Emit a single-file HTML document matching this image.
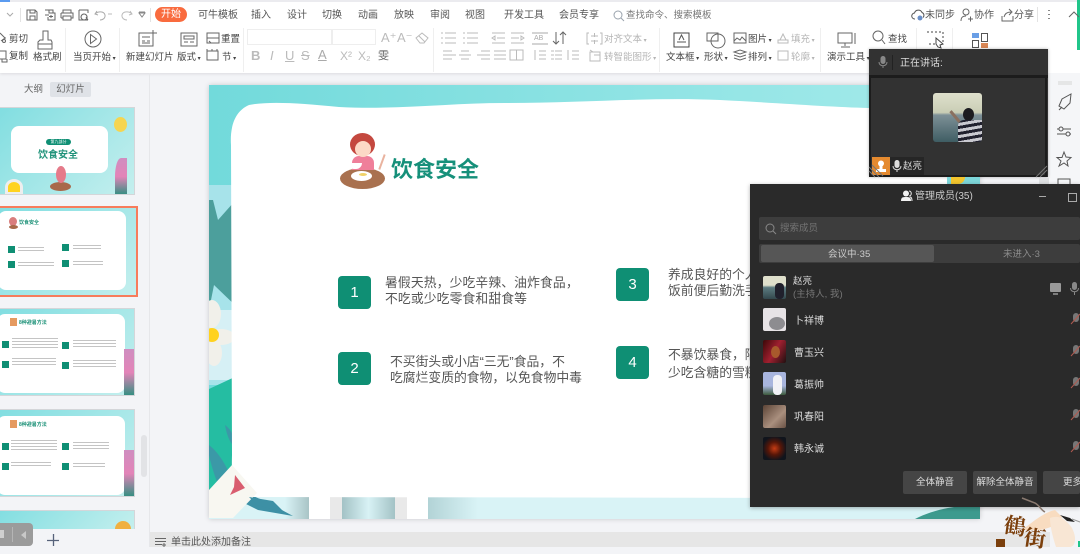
<!DOCTYPE html>
<html lang="zh">
<head>
<meta charset="utf-8">
<title>饮食安全</title>
<style>
html,body{margin:0;padding:0}
body{width:1080px;height:547px;overflow:hidden;position:relative;background:#f3f4f7;font-family:"Liberation Sans","Noto Sans CJK SC",sans-serif;color:#555}
.a{position:absolute}
.t{position:absolute;white-space:nowrap;line-height:12px}
.r{font-size:10px;color:#555}
.m{font-size:9.5px;color:#444}
.g{font-size:9.5px;color:#b5b5b5}
svg{position:absolute;overflow:visible}
.i{fill:none;stroke:#666;stroke-width:1}
.l{fill:none;stroke:#bbb;stroke-width:1}
.n{position:absolute;width:33px;height:33px;border-radius:4px;background:#0f8f74;color:#fff;font-size:15px;line-height:33px;text-align:center}
.b{position:absolute;font-size:12.8px;line-height:16px;color:#555;white-space:nowrap}
.th{position:absolute;left:-10px;width:145px;background:#fff;border:1px solid #d4d6d9;box-sizing:border-box;overflow:hidden}
.mn{position:absolute;left:794px;font-size:10px;line-height:12px;color:#ddd;white-space:nowrap}
.av{position:absolute;left:763px;width:23px;height:23px;border-radius:2px;overflow:hidden}
.btn{position:absolute;top:471px;height:23px;background:#454545;border-radius:2px;color:#ddd;font-size:9.5px;line-height:24px;text-align:center;white-space:nowrap;overflow:hidden}
.ln{position:absolute;background:repeating-linear-gradient(#c4c4c4 0 1px,#fff 1px 3px)}
.sq{position:absolute;width:7px;height:7px;background:#0f8f74}
</style>
</head>
<body>
<!-- top ribbon -->
<div class="a" style="left:0;top:0;width:1080px;height:73px;background:#fff;box-shadow:0 1px 3px rgba(0,0,0,.1)"></div>
<div class="a" style="left:0;top:0;width:1080px;height:2px;background:#ebebef"></div>
<div class="a" style="left:0;top:0;width:10px;height:2px;background:#5b9bf0"></div>
<div class="a" style="left:1077px;top:0;width:3px;height:50px;background:#20c58a"></div>
<div class="a" style="left:20px;top:8px;width:1px;height:14px;background:#e3e3e3"></div>
<div class="a" style="left:150px;top:8px;width:1px;height:14px;background:#e3e3e3"></div>

<!-- ribbon icons, in page coordinates -->
<svg style="left:0;top:0" width="1080" height="73" viewBox="0 0 1080 73">
<path class="i" style="stroke:#aaa" d="M7 13l3 3 3-3"/>
<path class="i" d="M27 10h8l2 2v8H27zM30 10v3h5v-3M30 20v-4h5v4"/>
<path class="i" d="M45 10h8v3M49 10v3h6v7h-7v-3M45 15h4M51 15v3M49 16.500h4"/>
<path class="i" d="M63 13v-3h8v3M61 13h12v5h-2M61 18v-5M61 18h2M63 16h8v4h-8z"/>
<path class="i" d="M79 10h9v3M79 10v10h9M84 14a3 3 0 1 0 .1 0M86 17l2 3"/>
<path class="i" style="stroke:#aaa" d="M97 11l-2 3 3 1M95 14c3-3 9-3 10 1 .5 3-2 5-5 5"/>
<path class="i" style="stroke:#bbb" d="M108 14h4"/>
<path class="i" style="stroke:#bbb" d="M130 11l2 3-3 1M132 14c-3-3-9-3-10 1-.5 3 2 5 5 5"/>
<path class="i" style="stroke:#888" d="M139 13h6l-3 4zM139 12h6"/>
<!-- clipboard -->
<path class="i" d="M0 33l5 5M1 41l4-3M5 38h1"/><circle cx="4" cy="41" r="1.500" class="i"/>
<path class="i" d="M0 51h6v8H0M2 59v3h5v-3"/>
<path class="i" d="M43 31h5v9h3l1 2v7H38v-7l2-2h3zM38 44h14"/>
<circle cx="93" cy="39" r="8" class="i"/><path class="i" d="M90.500 34.500l6 4.500-6 4.500z"/>
<path class="i" d="M139 33h14v13h-14zM142 37h8M142 41h3M147 41h3M142 43h8M153 30v7M150 33h7"/>
<path class="i" d="M181 33h16v13h-16zM184 36h10v3h-10zM184 42h4M190 42h4"/>
<path class="i" d="M207 33h12v5h-12zM207 38h12v5h-12zM209 41l2 2"/>
<path class="i" d="M207 51h11v9h-11zM207 49v2M212 49v2M217 49v2"/>
<!-- font grow/eraser -->
<path class="l" d="M416 38l6-5 6 5-4 5h-4zM419 36l6 6"/>
<!-- paragraph row 1 -->
<path class="l" d="M441 33h2M445 33h11M441 38h2M445 38h11M441 43h2M445 43h11M463 33h2M467 33h11M463 38h2M467 38h11M463 43h2M467 43h11"/>
<path class="l" d="M492 33h13M497 38h8M492 38l3-2v4zM492 43h13M511 33h13M511 38h8M524 38l-3-2v4zM511 43h13"/>
<path class="i" style="stroke:#aaa" d="M532 33h16M532 44h16"/>
<path class="i" d="M556 32v12M553 41l3 3 3-3M563 32v12M560 35l3-3 3 3"/>
<path class="l" d="M589 33h-2v11h2M600 33h2v11h-2M591 36h7M591 41h7M594.500 33v4M594.500 40v4"/>
<!-- paragraph row 2 -->
<path class="l" d="M443 51h9M443 55h13M443 59h9M461 51h8M459 55h12M461 59h8M481 51h9M477 55h13M481 59h9M494 51h12M494 55h12M494 59h12M510 50h13v10h-13zM516.500 50v10"/>
<path class="l" d="M539 51h7M539 55h7M539 59h7M535 50v10M555 51h7M555 55h7M555 59h7M551 51h3M551 55h3M551 59h3M572 51h7M572 55h7M572 59h7M568 50v10"/>
<path class="l" d="M590 52h10v9h-10zM590 50l3 2M594 55h6"/>
<!-- right group -->
<path d="M674 33h15v14h-15z" fill="none" stroke="#444"/><path d="M677 42h9M679 40l2.500-5 2.500 5" fill="none" stroke="#555"/>
<circle cx="718" cy="41" r="7" class="i"/><path class="i" d="M707 33h11v8h-11z"/>
<path class="i" d="M734 33h12v10h-12zM734 41l3-3 3 2 2-3 4 4"/>
<path class="i" d="M734 52l6-2 6 2-6 2zM734 55l6 2 6-2M734 58l6 2 6-2"/>
<path class="l" d="M778 40h10v3h-10zM780 40l3-6 3 6"/><path class="l" d="M778 51h10v9h-10z"/>
<path class="i" d="M838 33h14v10h-14zM845 43v3M841 47h9M855 33v11"/>
<circle cx="878" cy="36" r="5" class="i"/><path class="i" d="M882 40l3 4"/>
<path d="M927 32h16v12h-16" fill="none" stroke="#444" stroke-dasharray="2 2"/>
<path d="M936 38l7 6-3 1 1 3-3-1-2-3z" fill="#fff" stroke="#444"/>
</svg>

<!-- tabs -->
<div class="t" style="left:155px;top:7px;width:32px;height:15px;background:#f96b3e;border-radius:8px;color:#fff;font-size:10px;line-height:16px;text-align:center">开始</div>
<div class="t r" style="left:198px;top:10px">可牛模板</div>
<div class="t r" style="left:251px;top:10px">插入</div>
<div class="t r" style="left:287px;top:10px">设计</div>
<div class="t r" style="left:322px;top:10px">切换</div>
<div class="t r" style="left:358px;top:10px">动画</div>
<div class="t r" style="left:394px;top:10px">放映</div>
<div class="t r" style="left:430px;top:10px">审阅</div>
<div class="t r" style="left:465px;top:10px">视图</div>
<div class="t r" style="left:504px;top:10px">开发工具</div>
<div class="t r" style="left:559px;top:10px">会员专享</div>
<svg style="left:613px;top:10px" width="12" height="12"><circle cx="5" cy="5" r="4" fill="none" stroke="#9aa3ad"/><path d="M8 8l3 3" stroke="#9aa3ad"/></svg>
<div class="t" style="left:626px;top:10px;font-size:9.500px;color:#777">查找命令、搜索模板</div>

<svg style="left:911px;top:8px" width="14" height="14"><path d="M4 11a3 3 0 0 1-.5-6A4 4 0 0 1 11 4.500a3 3 0 0 1 1 5" fill="none" stroke="#555"/><circle cx="9" cy="10" r="2.500" fill="#6a8fc8"/></svg>
<div class="t r" style="left:925px;top:10px">未同步</div>
<svg style="left:960px;top:8px" width="14" height="14"><circle cx="6" cy="4" r="3" fill="none" stroke="#666"/><path d="M1 13c0-4 2-5 5-5M8 11h5M10.500 8.500v5" fill="none" stroke="#666"/></svg>
<div class="t r" style="left:974px;top:10px">协作</div>
<svg style="left:1001px;top:8px" width="14" height="14"><path d="M1 8v5h11V8M3 9c1-4 4-5 7-5M8 1l3 3-3 3" fill="none" stroke="#666"/></svg>
<div class="t r" style="left:1014px;top:10px">分享</div>
<div class="a" style="left:1037px;top:7px;width:1px;height:15px;background:#e3e3e3"></div>
<svg style="left:1047px;top:9px" width="30" height="12"><path d="M2 1v1M2 5v1M2 9v1" stroke="#555" stroke-width="1.400"/><path d="M22 8l5-5 5 5" fill="none" stroke="#666"/></svg>

<!-- ribbon labels -->
<div class="t m" style="left:9px;top:34px">剪切</div>
<div class="t m" style="left:9px;top:51px">复制</div>
<div class="t m" style="left:33px;top:52px">格式刷</div>
<div class="t m" style="left:73px;top:52px">当页开始<span style="font-size:6px"> ▾</span></div>
<div class="t m" style="left:126px;top:52px">新建幻灯片</div>
<div class="t m" style="left:177px;top:52px">版式<span style="font-size:6px"> ▾</span></div>
<div class="t m" style="left:221px;top:34px">重置</div>
<div class="t m" style="left:222px;top:52px">节<span style="font-size:6px"> ▾</span></div>
<div class="a" style="left:65px;top:28px;width:1px;height:44px;background:#efefef"></div>
<div class="a" style="left:119px;top:28px;width:1px;height:44px;background:#efefef"></div>
<div class="a" style="left:243px;top:28px;width:1px;height:44px;background:#efefef"></div>
<div class="a" style="left:433px;top:28px;width:1px;height:44px;background:#efefef"></div>
<div class="a" style="left:659px;top:28px;width:1px;height:44px;background:#efefef"></div>
<div class="a" style="left:820px;top:28px;width:1px;height:44px;background:#efefef"></div>
<div class="a" style="left:916px;top:28px;width:1px;height:44px;background:#efefef"></div>
<div class="a" style="left:952px;top:28px;width:1px;height:44px;background:#efefef"></div>

<!-- font boxes -->
<div class="a" style="left:247px;top:29px;width:85px;height:16px;border:1px solid #eee;box-sizing:border-box"></div>
<div class="a" style="left:332px;top:29px;width:44px;height:16px;border:1px solid #eee;box-sizing:border-box"></div>
<div class="t" style="left:251px;top:50px;font-size:13px;font-weight:bold;color:#bbb">B</div>
<div class="t" style="left:270px;top:50px;font-size:13px;font-style:italic;color:#bbb">I</div>
<div class="t" style="left:285px;top:50px;font-size:13px;text-decoration:underline;color:#bbb">U</div>
<div class="t" style="left:301px;top:50px;font-size:13px;text-decoration:line-through;color:#bbb">S</div>
<div class="t" style="left:318px;top:49px;font-size:13px;text-decoration:underline;color:#aaa">A</div>
<div class="t" style="left:340px;top:50px;font-size:12px;color:#bbb">X²</div>
<div class="t" style="left:358px;top:50px;font-size:12px;color:#bbb">X₂</div>
<div class="t" style="left:378px;top:50px;font-size:11px;color:#666">雯</div>
<div class="t" style="left:381px;top:32px;font-size:13px;color:#bbb">A⁺</div>
<div class="t" style="left:397px;top:32px;font-size:13px;color:#bbb">A⁻</div>
<div class="t" style="left:534px;top:33px;font-size:7px;color:#aaa">AB</div>
<div class="t g" style="left:604px;top:34px">对齐文本<span style="font-size:6px"> ▾</span></div>
<div class="t g" style="left:604px;top:52px">转智能图形<span style="font-size:6px"> ▾</span></div>

<!-- right labels -->
<div class="t m" style="left:666px;top:52px">文本框<span style="font-size:6px"> ▾</span></div>
<div class="t m" style="left:704px;top:52px">形状<span style="font-size:6px"> ▾</span></div>
<div class="t m" style="left:748px;top:34px">图片<span style="font-size:6px"> ▾</span></div>
<div class="t m" style="left:748px;top:52px">排列<span style="font-size:6px"> ▾</span></div>
<div class="t g" style="left:791px;top:34px">填充<span style="font-size:6px"> ▾</span></div>
<div class="t g" style="left:791px;top:52px">轮廓<span style="font-size:6px"> ▾</span></div>
<div class="t m" style="left:827px;top:52px">演示工具<span style="font-size:6px"> ▾</span></div>
<div class="t m" style="left:888px;top:34px">查找</div>
<div class="a" style="left:972px;top:33px;width:7px;height:5px;background:#6a9fe6"></div>
<div class="a" style="left:972px;top:40px;width:7px;height:8px;border:1px solid #555;box-sizing:border-box"></div>
<div class="a" style="left:981px;top:33px;width:7px;height:9px;border:1px solid #555;box-sizing:border-box"></div>
<div class="a" style="left:981px;top:43px;width:7px;height:5px;background:#d98755"></div>

<!-- left panel -->
<div class="a" style="left:149px;top:73px;width:1px;height:474px;background:#e6e7ea"></div>
<div class="t" style="left:24px;top:84px;font-size:9.500px;color:#666">大纲</div>
<div class="t" style="left:50px;top:82px;width:41px;height:15px;background:#dfe2e7;border-radius:2px;font-size:9.500px;line-height:15px;text-align:center;color:#666">幻灯片</div>

<!-- thumb 1 -->
<div class="th" style="top:107px;height:88px;background:linear-gradient(135deg,#7fdde0,#c4efee)">
  <div class="a" style="left:20px;top:18px;width:97px;height:47px;background:#fff;border-radius:8px"></div>
  <div class="a" style="left:55px;top:31px;width:25px;height:6px;border-radius:3px;background:#0f8f74;color:#fff;font-size:4px;line-height:6px;text-align:center">第九部分</div>
  <div class="t" style="left:47px;top:42px;font-size:10px;font-weight:bold;color:#20937a">饮食安全</div>
  <div class="a" style="left:59px;top:74px;width:21px;height:9px;border-radius:50%;background:#a8694a"></div>
  <div class="a" style="left:65px;top:58px;width:10px;height:17px;border-radius:50%;background:#e57b8a"></div>
  <div class="a" style="left:14px;top:71px;width:18px;height:16px;border-radius:50% 50% 0 0;background:#ffd320;border:3px solid #eee;box-sizing:border-box"></div>
  <div class="a" style="left:123px;top:9px;width:13px;height:15px;border-radius:50%;background:#f5d550"></div>
  <div class="a" style="left:124px;top:50px;width:12px;height:37px;background:linear-gradient(#cf8ec0,#e384b8 50%,#2f8f80);border-radius:50% 0 0 0"></div>
</div>
<!-- thumb 2 -->
<div class="a" style="left:-10px;top:206px;width:148px;height:91px;border:2px solid #f77c5c;box-sizing:border-box;background:linear-gradient(135deg,#7fdde0,#c4efee);overflow:hidden">
  <div class="a" style="left:6px;top:3px;width:128px;height:79px;background:#fff;border-radius:8px"></div>
  <div class="a" style="left:17px;top:9px;width:8px;height:9px;border-radius:50%;background:#d97d7d"></div>
  <div class="a" style="left:17px;top:17px;width:9px;height:4px;border-radius:50%;background:#a8694a"></div>
  <div class="t" style="left:27px;top:9px;font-size:5px;font-weight:bold;color:#20937a">饮食安全</div>
  <div class="sq" style="left:16px;top:38px"></div>
  <div class="sq" style="left:16px;top:53px"></div>
  <div class="sq" style="left:70px;top:36px"></div>
  <div class="sq" style="left:70px;top:52px"></div>
  <div class="ln" style="left:26px;top:39px;width:26px;height:5px"></div>
  <div class="ln" style="left:26px;top:54px;width:36px;height:5px"></div>
  <div class="ln" style="left:81px;top:37px;width:28px;height:5px"></div>
  <div class="ln" style="left:81px;top:53px;width:30px;height:5px"></div>
</div>
<!-- thumb 3 -->
<div class="th" style="top:308px;height:88px;background:linear-gradient(135deg,#7fdde0,#c4efee)">
  <div class="a" style="left:6px;top:5px;width:128px;height:79px;background:#fff;border-radius:8px"></div>
  <div class="t" style="left:28px;top:8px;font-size:5px;font-weight:bold;color:#20937a">8种避暑方法</div>
  <div class="a" style="left:19px;top:9px;width:7px;height:8px;background:#e59a60"></div>
  <div class="sq" style="left:11px;top:32px"></div>
  <div class="sq" style="left:11px;top:52px"></div>
  <div class="sq" style="left:71px;top:33px"></div>
  <div class="sq" style="left:71px;top:53px"></div>
  <div class="ln" style="left:21px;top:29px;width:46px;height:11px"></div>
  <div class="ln" style="left:21px;top:49px;width:44px;height:8px"></div>
  <div class="ln" style="left:82px;top:31px;width:43px;height:8px"></div>
  <div class="ln" style="left:82px;top:51px;width:43px;height:8px"></div>
  <div class="a" style="left:133px;top:40px;width:10px;height:47px;background:linear-gradient(#cf8ec0,#e384b8 50%,#2f8f80)"></div>
</div>
<!-- thumb 4 -->
<div class="th" style="top:409px;height:88px;background:linear-gradient(135deg,#7fdde0,#c4efee)">
  <div class="a" style="left:6px;top:6px;width:128px;height:79px;background:#fff;border-radius:8px"></div>
  <div class="t" style="left:28px;top:9px;font-size:5px;font-weight:bold;color:#20937a">8种避暑方法</div>
  <div class="a" style="left:19px;top:10px;width:7px;height:8px;background:#e59a60"></div>
  <div class="sq" style="left:11px;top:33px"></div>
  <div class="sq" style="left:11px;top:53px"></div>
  <div class="sq" style="left:71px;top:33px"></div>
  <div class="sq" style="left:71px;top:53px"></div>
  <div class="ln" style="left:20px;top:30px;width:46px;height:11px"></div>
  <div class="ln" style="left:20px;top:52px;width:40px;height:6px"></div>
  <div class="ln" style="left:82px;top:32px;width:36px;height:8px"></div>
  <div class="ln" style="left:82px;top:53px;width:32px;height:5px"></div>
  <div class="a" style="left:133px;top:40px;width:10px;height:47px;background:linear-gradient(#cf8ec0,#e384b8 50%,#2f8f80)"></div>
</div>
<!-- thumb 5 -->
<div class="a" style="left:-10px;top:510px;width:145px;height:20px;background:linear-gradient(135deg,#7fdde0,#c4efee);border:1px solid #d4d6d9;box-sizing:border-box"></div>
<div class="a" style="left:115px;top:521px;width:16px;height:9px;background:#f0b040;border-radius:8px 8px 0 0"></div>
<div class="a" style="left:0;top:529px;width:149px;height:18px;background:#f3f4f7"></div>
<div class="a" style="left:141px;top:435px;width:6px;height:42px;background:#e2e3e6;border-radius:3px"></div>
<div class="a" style="left:0;top:523px;width:33px;height:23px;background:#9b9b9b;border-radius:0 4px 4px 0"></div>
<div class="a" style="left:0;top:530px;width:4px;height:8px;background:#cfcfcf"></div>
<div class="a" style="left:12px;top:527px;width:1px;height:15px;background:#b5b5b5"></div>
<svg style="left:20px;top:531px" width="8" height="9"><path d="M6 0v8L1 4z" fill="#c8c8c8"/></svg>
<svg style="left:47px;top:534px" width="13" height="13"><path d="M6.500 0v12M0 6.500h12" stroke="#56627a" stroke-width="1.300"/></svg>

<!-- slide -->
<div class="a" style="left:209px;top:85px;width:771px;height:434px;background:linear-gradient(90deg,#72dadb,#a6ebeb);box-shadow:0 0 5px rgba(0,0,0,.18);overflow:hidden">
  <svg style="left:0;top:0" width="771" height="434" viewBox="0 0 771 434">
    <defs>
      <linearGradient id="bd" x1="0" x2="1" y1="0" y2="0"><stop offset="0" stop-color="#b2d3d6"/><stop offset="1" stop-color="#d9f3f6"/></linearGradient>
      <linearGradient id="rg" x1="0" x2="1" y1="0" y2="0"><stop offset="0" stop-color="#a3c2c5"/><stop offset=".5" stop-color="#d8f2f5"/><stop offset="1" stop-color="#a3c2c5"/></linearGradient>
      <linearGradient id="lb" x1="0" x2="1" y1="0" y2="0"><stop offset="0" stop-color="#d9f3f6"/><stop offset=".7" stop-color="#d9f3f6"/><stop offset="1" stop-color="#a9c4c6"/></linearGradient>
    </defs>
    <!-- left strip -->
    <rect x="0" y="100" width="30" height="200" fill="#a7e3ea"/>
    <path d="M0 115h4l5 20 16-18 6 0v108L5 200 0 225z" fill="#4c9f9c"/>
    <rect x="0" y="225" width="30" height="70" fill="#d6f0f5"/>
    <path d="M0 304l30-14v140H0z" fill="#25bda2"/>
    <path d="M0 360c10 8 20 22 28 50l-10 10C8 400 2 380 0 370zM16 340c6 4 10 12 12 24-6-4-10-12-12-24z" fill="#3f93a8" opacity=".85"/>
    <!-- flower -->
    <ellipse cx="3" cy="229" rx="9" ry="14" fill="#f1f0ea"/>
    <ellipse cx="12" cy="252" rx="14" ry="8" fill="#f1f0ea"/>
    <ellipse cx="5" cy="268" rx="8" ry="13" fill="#f1f0ea"/>
    <circle cx="3" cy="250" r="7" fill="#ffd21f"/>
    <!-- bottom strip -->
    <rect x="0" y="412" width="771" height="22" fill="#d9f3f6"/>
    <rect x="20" y="412" width="80" height="22" fill="url(#lb)"/>
    <path d="M30 405l28 12 26 14-35-6-20-10z" fill="#3d90a5"/>
    <rect x="100" y="412" width="21" height="22" fill="#fff"/>
    <rect x="121" y="412" width="12" height="22" fill="#e9e9e9"/>
    <rect x="133" y="412" width="53" height="22" fill="url(#rg)"/>
    <rect x="186" y="412" width="12" height="22" fill="#e9e9e9"/>
    <rect x="198" y="412" width="21" height="22" fill="#fff"/>
    <rect x="219" y="412" width="50" height="22" fill="url(#bd)"/>
    <path d="M706 434C725 424 750 420 771 420V434z" fill="#3d9a8e"/>
    <!-- white card -->
    <path d="M40 20C60 16 90 18 130 22C190 25 240 18 296 18C370 18 440 12 511 15C570 18 620 22 660 23C700 25 730 30 738 45L738 380C735 400 700 412 660 413L40 412C26 412 22 405 23 370L22 60C21 45 24 27 40 20Z" fill="#fff"/>
    <!-- paper -->
    <path d="M23 380L48 408L24 433H0V405z" fill="#f8f7f1"/>
    <path d="M26 390L36 403L21 410L25 402z" fill="#d95d6f"/>
    <path d="M40 412l24 4 12 12-28-8z" fill="#3d90a5"/>
  </svg>
  <!-- character -->
  <div class="a" style="left:131px;top:83px;width:45px;height:21px;border-radius:50%;background:#a9714f"></div>
  <div class="a" style="left:142px;top:86px;width:21px;height:10px;border-radius:50%;background:#fff"></div>
  <div class="a" style="left:150px;top:88px;width:8px;height:3px;border-radius:50%;background:#f0d268"></div>
  <div class="a" style="left:143px;top:71px;width:22px;height:14px;border-radius:7px 7px 0 0;background:#ef7f9a"></div>
  <div class="a" style="left:141px;top:48px;width:25px;height:23px;border-radius:50%;background:#c4483f"></div>
  <div class="a" style="left:146px;top:56px;width:16px;height:16px;border-radius:50%;background:#fcd9c6"></div>
  <div class="a" style="left:139px;top:78px;width:14px;height:6px;border-radius:0 0 7px 7px;background:#fff"></div>
  <div class="a" style="left:172px;top:69px;width:2px;height:16px;background:#e9b39f;transform:rotate(20deg)"></div>
  <div class="t" style="left:182px;top:73px;font-size:22px;line-height:24px;font-weight:bold;color:#16907a">饮食安全</div>
  <div class="n" style="left:129px;top:191px">1</div>
  <div class="b" style="left:176px;top:190px;letter-spacing:.12px">暑假天热，少吃辛辣、油炸食品，<br>不吃或少吃零食和甜食等</div>
  <div class="n" style="left:129px;top:267px">2</div>
  <div class="b" style="left:181px;top:269px">不买街头或小店“三无”食品，不<br>吃腐烂变质的食物，以免食物中毒</div>
  <div class="n" style="left:407px;top:183px">3</div>
  <div class="b" style="left:459px;top:182px">养成良好的个人卫生习惯，<br>饭前便后勤洗手</div>
  <div class="n" style="left:407px;top:261px">4</div>
  <div class="b" style="left:459px;top:261px;line-height:18px">不暴饮暴食，隔夜饭菜要<br>少吃含糖的雪糕冷饮</div>
</div>

<!-- right sidebar -->
<div class="a" style="left:1047px;top:73px;width:33px;height:112px;background:#f5f6f8"></div>
<svg style="left:1056px;top:79px" width="24" height="110">
<path d="M2 3h14M2 5h14" stroke="#d5d5d5"/>
<path d="M3 27l3-7 9-5-1 9-6 6zM3 31l3-3" fill="none" stroke="#555"/>
<path d="M1 50h14M1 55h14" stroke="#555"/><circle cx="5" cy="50" r="2" fill="#f5f6f8" stroke="#555"/><circle cx="12" cy="55" r="2" fill="#f5f6f8" stroke="#555"/>
<path d="M8 73l2 5 5 .5-4 3.500 1 5-4-3-5 3 2-5-4-3.500h5z" fill="none" stroke="#555"/>
<path d="M2 100h12v6H2z" fill="none" stroke="#555"/>
</svg>

<!-- speaker panel -->
<div class="a" style="left:869px;top:49px;width:179px;height:128px;background:#323232;box-shadow:0 0 3px rgba(0,0,0,.3)"></div>
<div class="a" style="left:869px;top:75px;width:179px;height:3px;background:#1c1c1c"></div>
<div class="a" style="left:869px;top:75px;width:2px;height:102px;background:#1c1c1c"></div>
<div class="a" style="left:1045px;top:75px;width:2px;height:102px;background:#1c1c1c"></div>
<div class="a" style="left:869px;top:175px;width:178px;height:2px;background:#1c1c1c"></div>
<div class="a" style="left:892px;top:55px;width:1px;height:15px;background:#222"></div>
<svg style="left:878px;top:56px" width="10" height="13"><rect x="2.500" y="0" width="5" height="8" rx="2.500" fill="#888"/><path d="M1 6c0 5 8 5 8 0M5 10v2" fill="none" stroke="#888"/></svg>
<div class="t" style="left:900px;top:58px;font-size:10px;color:#ddd">正在讲话:</div>
<div class="a" style="left:933px;top:93px;width:49px;height:49px;border-radius:3px;overflow:hidden;background:linear-gradient(#dfe0cc 0,#c9cdb5 40%,#7d9097 45%,#3f5d63 100%)">
  <div class="a" style="left:30px;top:15px;width:11px;height:13px;border-radius:50%;background:#1c1c20"></div>
  <div class="a" style="left:25px;top:27px;width:24px;height:22px;border-radius:6px 0 0 0;background:repeating-linear-gradient(170deg,#20202e 0 3px,#c9c9d0 3px 6px)"></div>
  <div class="a" style="left:15px;top:22px;width:14px;height:3px;background:#8a7060;transform:rotate(50deg)"></div>
</div>
<div class="a" style="left:872px;top:157px;width:18px;height:18px;background:#e58a2f"></div>
<svg style="left:875px;top:160px" width="12" height="13"><circle cx="6" cy="3.500" r="3" fill="#fff"/><path d="M4.500 6h3v3h3.500v3H1V9h3.500z" fill="#fff"/></svg>
<div class="a" style="left:890px;top:157px;width:34px;height:18px;background:#262626"></div>
<svg style="left:892px;top:160px" width="10" height="13"><rect x="2.500" y="0" width="5" height="8" rx="2.500" fill="#ddd"/><path d="M1 6c0 5 8 5 8 0M5 10v2" fill="none" stroke="#ddd"/></svg>
<div class="t" style="left:903px;top:161px;font-size:9.500px;color:#ddd">赵亮</div>
<svg style="left:869px;top:165px" width="179" height="12"><path d="M0 2l10 10M0 6l6 6M3 0l11 11M167 12l11-11M171 12l7-7" stroke="#777" stroke-width="1"/></svg>

<!-- slide tip visible between the panels -->
<div class="a" style="left:947px;top:177px;width:33px;height:8px;background:#7dd6d9"></div>
<div class="a" style="left:951px;top:177px;width:14px;height:7px;background:#f2c52e;border-radius:0 0 7px 0"></div>
<div class="a" style="left:1039px;top:178px;width:10px;height:7px;background:#dfe0e2"></div>

<!-- members panel -->
<div class="a" style="left:750px;top:184px;width:330px;height:323px;background:#2a2a2a;box-shadow:0 1px 4px rgba(0,0,0,.3)"></div>
<svg style="left:900px;top:190px" width="13" height="12"><circle cx="6" cy="3.500" r="3" fill="#f2f2f2"/><path d="M1 11c0-4 2-4 5-4s5 0 5 4z" fill="#f2f2f2"/><path d="M9 1c3 0 3 5 0 5M12 11c0-3-1-4-2-4" stroke="#f2f2f2" fill="none"/></svg>
<div class="t" style="left:915px;top:191px;font-size:10px;color:#ccc">管理成员(35)</div>
<div class="a" style="left:1039px;top:196px;width:7px;height:1px;background:#aaa"></div>
<div class="a" style="left:1068px;top:193px;width:7px;height:7px;border:1px solid #aaa"></div>
<div class="a" style="left:759px;top:217px;width:321px;height:23px;background:#3d3d3d;border-radius:2px"></div>
<svg style="left:765px;top:223px" width="12" height="12"><circle cx="5" cy="5" r="4" fill="none" stroke="#888"/><path d="M8 8l3 3" stroke="#888"/></svg>
<div class="t" style="left:780px;top:223px;font-size:9.500px;color:#737373">搜索成员</div>
<div class="a" style="left:759px;top:244px;width:321px;height:19px;background:#3d3d3d;border-radius:2px"></div>
<div class="a" style="left:761px;top:245px;width:173px;height:17px;background:#565656;border-radius:2px"></div>
<div class="t" style="left:828px;top:249px;font-size:9.500px;color:#ccc">会议中·35</div>
<div class="t" style="left:1003px;top:249px;font-size:9.500px;color:#8c8c8c">未进入·3</div>

<div class="av" style="top:276px;background:linear-gradient(#dfe0cc 40%,#5c7b80 50%,#33484d)"><div class="a" style="left:12px;top:7px;width:9px;height:16px;background:#20202c;border-radius:4px"></div></div>
<div class="t" style="left:793px;top:276px;font-size:9.500px;color:#ddd">赵亮</div>
<div class="t" style="left:793px;top:289px;font-size:9.500px;color:#777">(主持人, 我)</div>
<svg style="left:1050px;top:283px" width="30" height="13"><rect x="0" y="0" width="11" height="9" rx="1" fill="#999"/><path d="M3 11h5" stroke="#999" stroke-width="1.500"/><rect x="22" y="-1" width="5" height="8" rx="2.500" fill="#888"/><path d="M20.500 5c0 5 8 5 8 0M24.500 9v3" fill="none" stroke="#888"/></svg>

<div class="av" style="top:308px;background:#e7e3e6"><div class="a" style="left:6px;top:9px;width:16px;height:13px;border-radius:50%;background:#8d8c90"></div></div>
<div class="mn" style="top:316px">卜祥博</div>
<div class="av" style="top:340px;background:linear-gradient(120deg,#3c0808,#a02030 50%,#201010)"><div class="a" style="left:8px;top:6px;width:9px;height:12px;border-radius:50%;background:#a85a2c"></div></div>
<div class="mn" style="top:348px">曹玉兴</div>
<div class="av" style="top:372px;background:linear-gradient(#a8b5de 60%,#3c5a3c)"><div class="a" style="left:10px;top:3px;width:9px;height:20px;border-radius:4px;background:#f1f1f6"></div></div>
<div class="mn" style="top:380px">葛振帅</div>
<div class="av" style="top:405px;background:linear-gradient(135deg,#5c4436,#a98f7e 60%,#6a5245)"></div>
<div class="mn" style="top:412px">巩春阳</div>
<div class="av" style="top:437px;background:radial-gradient(circle at 50% 50%,#c63c14 0,#561608 40%,#10141c 75%)"></div>
<div class="mn" style="top:444px">韩永诚</div>

<svg style="left:1070px;top:313px" width="10" height="145" viewBox="0 0 10 145">
<g fill="#777"><rect x="3" y="0" width="6" height="9" rx="3"/><rect x="3" y="32" width="6" height="9" rx="3"/><rect x="3" y="64" width="6" height="9" rx="3"/><rect x="3" y="96" width="6" height="9" rx="3"/><rect x="3" y="128" width="6" height="9" rx="3"/></g>
<g stroke="#b05a50" stroke-width="1"><path d="M1 11l9-10M1 43l9-10M1 75l9-10M1 107l9-10M1 139l9-10"/></g>
</svg>

<div class="btn" style="left:903px;width:64px">全体静音</div>
<div class="btn" style="left:973px;width:64px">解除全体静音</div>
<div class="btn" style="left:1043px;width:37px;text-align:left;text-indent:20px">更多</div>

<!-- notes bar -->
<div class="a" style="left:150px;top:532px;width:900px;height:15px;background:#e6e6e6"></div>
<svg style="left:155px;top:538px" width="12" height="9"><path d="M0 .500h11M0 3.500h11M0 6.500h7M9 5v4M7 7h4" stroke="#666"/></svg>
<div class="t" style="left:171px;top:537px;font-size:10px;color:#555">单击此处添加备注</div>

<!-- bottom-right decoration -->
<svg style="left:0;top:0" width="1080" height="547" viewBox="0 0 1080 547">
<path d="M1022 530C1035 520 1045 512 1055 510L1062 517C1058 525 1050 528 1040 530z" fill="#f8dcc0"/>
<path d="M1050 518C1058 515 1065 518 1072 528C1078 540 1074 547 1070 547L1056 547C1052 535 1050 525 1050 518z" fill="#f8e6d4"/>
<path d="M1022 498L1035 503C1040 506 1041 510 1045 512" fill="none" stroke="#8a7a70" stroke-width="1.500"/>
<path d="M1060 515l10 3 5 4-8-1z" fill="#222"/>
<path d="M1072 519l8 3" stroke="#999" fill="none"/>
</svg>
<div class="t" style="left:1004px;top:515px;font-size:22px;line-height:22px;font-weight:bold;color:#7b3f0c;font-family:'Noto Serif CJK SC',serif;transform:rotate(8deg)">鶴</div>
<div class="t" style="left:1024px;top:527px;font-size:22px;line-height:22px;font-weight:bold;color:#7b3f0c;font-family:'Noto Serif CJK SC',serif;transform:rotate(8deg)">街</div>
<div class="a" style="left:996px;top:539px;width:9px;height:8px;background:#7b3f0c"></div>
<div class="a" style="left:1078px;top:541px;width:2px;height:6px;background:#20c58a"></div>
</body>
</html>
